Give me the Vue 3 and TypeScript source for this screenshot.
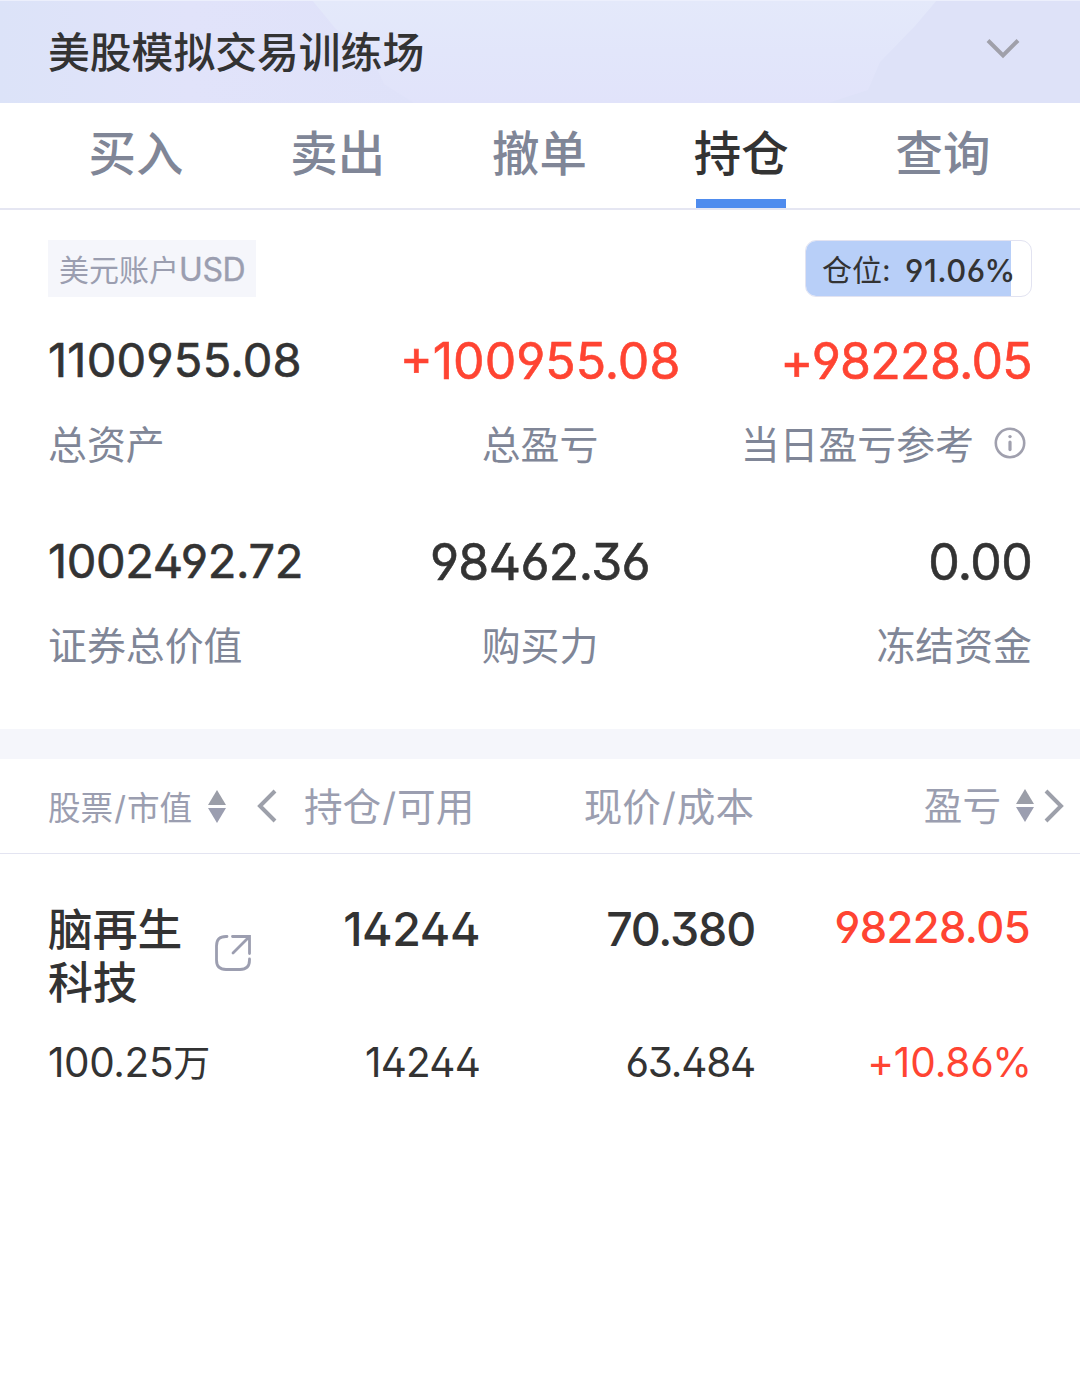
<script setup lang="ts">
interface Metric {
  value: string
  label: string
  rise?: boolean
  info?: boolean
}

const tabs = ['买入', '卖出', '撤单', '持仓', '查询']
const activeTab = '持仓'

const metricRows: Metric[][] = [
  [
    { value: '1100955.08', label: '总资产' },
    { value: '+100955.08', label: '总盈亏', rise: true },
    { value: '+98228.05', label: '当日盈亏参考', rise: true, info: true },
  ],
  [
    { value: '1002492.72', label: '证券总价值' },
    { value: '98462.36', label: '购买力' },
    { value: '0.00', label: '冻结资金' },
  ],
]

const positionRatio = 91.06
</script>

<template>
  <div class="page">
    <header class="top">
      <svg class="top-bg" viewBox="0 0 1080 103" preserveAspectRatio="none" aria-hidden="true">
        <defs>
          <linearGradient id="mid" x1="0" y1="0" x2="0" y2="1">
            <stop offset="0" stop-color="#e4e9fa" />
            <stop offset="0.5" stop-color="#e2e6fa" />
            <stop offset="1" stop-color="#e1e3fa" />
          </linearGradient>
          <linearGradient id="left" x1="0" y1="0" x2="1" y2="0">
            <stop offset="0" stop-color="#dce3f8" />
            <stop offset="0.45" stop-color="#e1e3fa" />
            <stop offset="1" stop-color="#dfe2f9" />
          </linearGradient>
        </defs>
        <rect width="1080" height="103" fill="#dee2f8" />
        <path d="M0 0H420V103H0Z" fill="url(#left)" />
        <path d="M312 0H937L915 26L880 62L868 90L828 103H414L384 84L372 58L335 28Z" fill="url(#mid)" />
        <rect width="1080" height="1" fill="#eceffc" />
      </svg>
      <h1 class="title">美股模拟交易训练场</h1>
      <svg class="chevron" width="34" height="22" viewBox="0 0 34 22" aria-hidden="true">
        <path d="M2 2.5L17 17.5L32 2.5" fill="none" stroke="#a0a0aa" stroke-width="4" />
      </svg>
    </header>

    <nav class="tabs">
      <a v-for="tab in tabs" :key="tab" class="tab" :class="{ active: tab === activeTab }">{{ tab }}</a>
    </nav>

    <section class="account">
      <div class="account-head">
        <span class="currency">美元账户<span class="code">USD</span></span>
        <div class="ratio">
          <div class="ratio-fill" :style="{ width: positionRatio + '%' }"></div>
          <span class="ratio-name">仓位:</span>
          <span class="ratio-value">{{ positionRatio }}%</span>
        </div>
      </div>
      <div v-for="(row, i) in metricRows" :key="i" class="metrics" :class="{ lower: i > 0 }">
        <div v-for="m in row" :key="m.label" class="metric">
          <div class="value" :class="{ rise: m.rise }">{{ m.value }}</div>
          <div class="label">
            {{ m.label }}
            <svg v-if="m.info" class="info" width="32" height="32" viewBox="0 0 32 32" aria-hidden="true">
              <circle cx="16" cy="16" r="14.2" fill="none" stroke="#a0a0ae" stroke-width="2.6" />
              <circle cx="16" cy="9.6" r="1.7" fill="#a0a0ae" />
              <path d="M16 15V22.6" stroke="#a0a0ae" stroke-width="3.2" stroke-linecap="round" />
            </svg>
          </div>
        </div>
      </div>
    </section>

    <div class="band"></div>

    <section>
      <div class="row head">
        <div class="c1 h-small">
          股票<span class="slash">/</span>市值
          <svg class="sort" width="18" height="33" viewBox="0 0 18 33" aria-hidden="true">
            <path d="M9 0L18 15H0Z" fill="#9b9ea8" />
            <path d="M0 18H18L9 33Z" fill="#9b9eb0" />
          </svg>
          <svg class="prev" width="20" height="34" viewBox="0 0 20 34" aria-hidden="true">
            <path d="M18 2L3 17L18 32" fill="none" stroke="#9da0aa" stroke-width="4" />
          </svg>
        </div>
        <div class="c2">持仓<span class="slash">/</span>可用</div>
        <div class="c3">现价<span class="slash">/</span>成本</div>
        <div class="c4">
          盈亏
          <svg class="sort" width="18" height="33" viewBox="0 0 18 33" aria-hidden="true">
            <path d="M9 0L18 15H0Z" fill="#9b9ea8" />
            <path d="M0 18H18L9 33Z" fill="#9b9eb0" />
          </svg>
          <svg class="next" width="20" height="34" viewBox="0 0 20 34" aria-hidden="true">
            <path d="M2 2L17 17L2 32" fill="none" stroke="#9da0aa" stroke-width="4" />
          </svg>
        </div>
      </div>

      <div class="row stock">
        <div class="c1 stock-cell">
          <span class="stock-name">脑再生科技</span>
          <svg class="share" width="38" height="38" viewBox="0 0 38 38" fill="none" stroke="#9c9eb0" stroke-width="2.8" stroke-linecap="round" aria-hidden="true">
            <path d="M13 2.5H12Q2.5 2.5 2.5 12V26Q2.5 35.5 12 35.5H26Q35.5 35.5 35.5 26V25" />
            <path d="M18.5 2.5H35.5V19.5M35 3L19 19" />
          </svg>
        </div>
        <div class="c2 strong">14244</div>
        <div class="c3 strong price">70.380</div>
        <div class="c4 strong profit">98228.05</div>
      </div>
      <div class="row sub">
        <div class="c1">100.25<span class="unit">万</span></div>
        <div class="c2">14244</div>
        <div class="c3">63.484</div>
        <div class="c4 rise">+10.86%</div>
      </div>
    </section>
  </div>
</template>

<style>
body {
  margin: 0;
  background: #fff;
}
</style>

<style scoped>
.page {
  width: 1080px;
  height: 1388px;
  overflow: hidden;
  background: #fff;
  color: #333;
  font-family: Inter, 'Noto Sans CJK SC', sans-serif;
  font-feature-settings: 'ss01' 1, 'kern' 1;
  white-space: nowrap;
}
.top {
  position: relative;
  display: flex;
  align-items: center;
  justify-content: space-between;
  box-sizing: border-box;
  height: 103px;
  padding: 0 60px 0 48px;
}
.top-bg {
  position: absolute;
  inset: 0;
  width: 100%;
  height: 100%;
}
.title {
  position: relative;
  margin: 3px 0 0;
  font-size: 41.8px;
  font-weight: 500;
  line-height: 103px;
}
.chevron {
  position: relative;
  margin-bottom: 5px;
}
.tabs {
  display: flex;
  justify-content: space-between;
  box-sizing: border-box;
  height: 107px;
  padding: 0 92px 0 91px;
  border-bottom: 2px solid #e5e6f2;
}
.tab {
  width: 90px;
  display: flex;
  justify-content: center;
  box-sizing: border-box;
  height: 105px;
  font-size: 47.4px;
  font-weight: 500;
  line-height: 101px;
  color: #808697;
}
.tab.active {
  color: #333;
  border-bottom: 9px solid #4f8cee;
}
.account {
  height: 519px;
  padding: 30px 48px 0;
  box-sizing: border-box;
}
.account-head {
  display: flex;
  justify-content: space-between;
  height: 57px;
}
.currency {
  box-sizing: border-box;
  width: 208px;
  padding-left: 11px;
  background: #f5f6fb;
  color: #9b9eb0;
  font-size: 30px;
  line-height: 60px;
}
.code {
  font-size: 32px;
  letter-spacing: -0.4px;
  -webkit-text-stroke: 0.4px currentColor;
}
.ratio {
  position: relative;
  display: flex;
  box-sizing: border-box;
  width: 227px;
  height: 57px;
  border: 1px solid #e2e3f1;
  border-radius: 11px;
  overflow: hidden;
  padding-left: 16px;
  font-size: 30px;
  line-height: 59px;
}
.ratio-fill {
  position: absolute;
  inset: 0 auto 0 0;
  background: #b8cff8;
}
.ratio-name {
  position: relative;
  width: 83px;
}
.ratio-value {
  position: relative;
  font-size: 31px;
  font-weight: 500;
  letter-spacing: 0.5px;
}
.metrics {
  display: grid;
  grid-template-columns: 1fr 1fr 1fr;
  height: 201px;
}
.metric {
  padding-top: 33px;
  text-align: center;
}
.metric:first-child {
  text-align: left;
}
.metric:last-child {
  text-align: right;
}
.value {
  height: 62px;
  font-size: 50px;
  line-height: 62px;
  -webkit-text-stroke: 0.6px currentColor;
}
.metric:first-child .value {
  font-size: 47px;
  line-height: 60px;
  letter-spacing: 0.2px;
}
.lower .metric:first-child .value {
  letter-spacing: -0.4px;
}
.lower .value {
  letter-spacing: -0.6px;
}
.metric:last-child .value {
  letter-spacing: -0.7px;
}
.label {
  margin-top: 23px;
  font-size: 38.9px;
  line-height: 60px;
  color: #808697;
}
.metric:last-child .label {
  display: flex;
  justify-content: flex-end;
  align-items: center;
}
.info {
  margin: 0 6px 4px 20px;
}
.rise {
  color: #ff4432;
}
.band {
  height: 30px;
  background: #f5f6fb;
}
.row {
  display: grid;
  grid-template-columns: 256px 176px 275px 275px;
  padding: 0 50px 0 48px;
}
.c2,
.c3,
.c4 {
  text-align: right;
}
.head {
  height: 94px;
  border-bottom: 1px solid #e3e4f1;
  font-size: 38.6px;
  line-height: 96px;
  color: #9b9eb0;
}
.slash {
  display: inline-block;
  padding: 0 1px;
}
.head .c1,
.head .c4 {
  display: flex;
  align-items: center;
}
.head .c2 {
  width: 170px;
}
.head .c3 {
  padding-right: 1px;
}
.head .c4 {
  height: 94px;
  justify-content: flex-end;
  margin-right: -34px;
}
.h-small {
  box-sizing: border-box;
  font-size: 32.6px;
  padding-top: 3px;
  height: 94px;
}
.head .c1 .sort {
  margin: 0 0 3px 16px;
}
.head .c4 .sort {
  margin: 0 0 1px 15px;
}
.prev {
  margin: 0 0 4px 31px;
}
.next {
  margin: 0 0 1px 10px;
}
.stock {
  padding-top: 48px;
  height: 130px;
}
.stock-cell {
  display: flex;
}
.stock-name {
  width: 136px;
  padding-top: 2px;
  white-space: normal;
  font-size: 44.8px;
  font-weight: 500;
  line-height: 53px;
}
.share {
  margin: 32px 0 0 30px;
}
.strong {
  font-size: 46.5px;
  font-weight: 550;
  line-height: 55px;
  letter-spacing: -0.4px;
}
.price {
  letter-spacing: -1.2px;
}
.profit {
  font-size: 43.5px;
  line-height: 51px;
  letter-spacing: -0.6px;
  color: #ff4432;
}
.sub {
  font-size: 40.5px;
  line-height: 62px;
}
.sub .c1 {
  letter-spacing: -0.4px;
}
.sub .c2 {
  letter-spacing: -0.8px;
}
.sub .c3 {
  letter-spacing: -1.2px;
}
.sub .c4 {
  margin-right: -2px;
  letter-spacing: -0.1px;
}
.unit {
  font-size: 37px;
}
</style>
